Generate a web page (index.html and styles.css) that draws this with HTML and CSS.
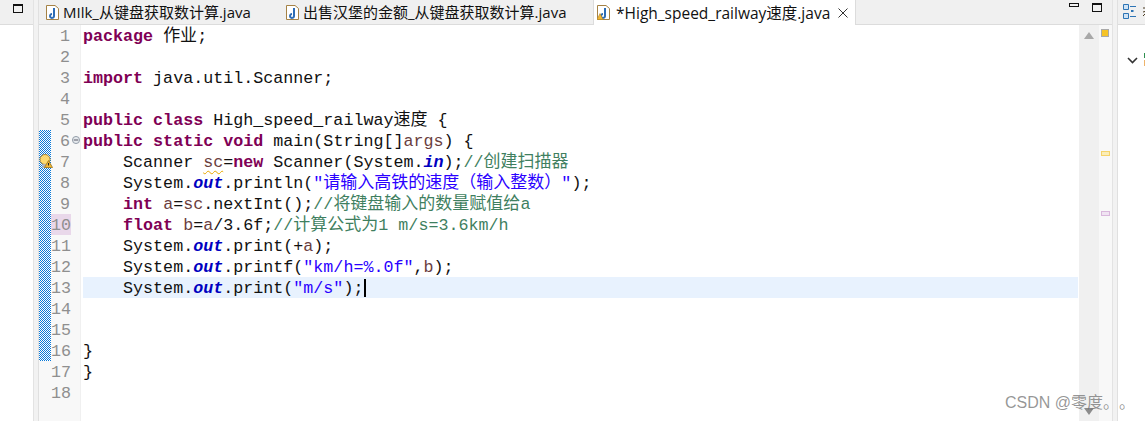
FILE: index.html
```html
<!DOCTYPE html>
<html lang="zh">
<head>
<meta charset="utf-8">
<title>Eclipse editor</title>
<link rel="stylesheet" href="styles.css">
</head>
<body>
<div class="window">
  <div class="left-panel">
    <div class="left-head"><span class="max-icon"></span></div>
  </div>
  <div class="sash"></div>
  <div class="editor-area">
    <div class="tabs">
      <div class="tab">
        <svg class="file-icon" viewBox="0 0 13 15"><path d="M.5.5h8.500l3.500 3v11H.5z" fill="#fff" stroke="#a58245"/><path d="M8 3v7.500a2 2 0 1 1-2-1.600" fill="none" stroke="#2d6cb5" stroke-width="2"/></svg>
        <span>MIlk_从键盘获取数计算.java</span>
      </div>
      <div class="tab">
        <svg class="file-icon" viewBox="0 0 13 15"><path d="M.5.5h8.500l3.500 3v11H.5z" fill="#fff" stroke="#a58245"/><path d="M8 3v7.500a2 2 0 1 1-2-1.600" fill="none" stroke="#2d6cb5" stroke-width="2"/></svg>
        <span>出售汉堡的金额_从键盘获取数计算.java</span>
      </div>
      <div class="tab active">
        <svg class="file-icon" viewBox="0 0 13 15"><path d="M.5.5h8.500l3.500 3v11H.5z" fill="#fff" stroke="#a58245"/><path d="M8 3v7.500a2 2 0 1 1-2-1.600" fill="none" stroke="#2d6cb5" stroke-width="2"/><path d="M3 8.500l3 6H0z" fill="#f2b632" stroke="#b58a2c" stroke-width=".6"/></svg>
        <span>*High_speed_railway速度.java</span>
        <svg class="close" viewBox="0 0 10 10"><path d="M.5.5l9 9M9.500.5l-9 9" stroke="#333" fill="none"/></svg>
      </div>
      <div class="tab-tools">
        <span class="min-icon"></span>
        <span class="max-icon"></span>
      </div>
    </div>
    <div class="editor">
      <div class="markers">
        <div class="changed"></div>
        <svg class="bulb" viewBox="0 0 14 14"><circle cx="6" cy="5.500" r="5" fill="#fbd970" stroke="#a8873a"/><rect x="3.500" y="10" width="5" height="4" fill="#aeb2b8"/><path d="M9.500 6.500l4 7H5.500z" fill="#f2b632" stroke="#9a7418" stroke-width=".8"/><path d="M9.500 9v2.500" stroke="#222"/></svg>
      </div>
      <div class="numbers">
        <div class="num">1</div>
        <div class="num">2</div>
        <div class="num">3</div>
        <div class="num">4</div>
        <div class="num">5</div>
        <div class="num">6<svg class="fold" viewBox="0 0 9 9"><circle cx="4.500" cy="4.500" r="4" fill="#e6eaee" stroke="#8a94a0"/><path d="M2 4.500h5" stroke="#445"/></svg></div>
        <div class="num">7</div>
        <div class="num">8</div>
        <div class="num">9</div>
        <div class="num num-mark">10</div>
        <div class="num">11</div>
        <div class="num">12</div>
        <div class="num">13</div>
        <div class="num">14</div>
        <div class="num">15</div>
        <div class="num">16</div>
        <div class="num">17</div>
        <div class="num">18</div>
      </div>
      <div class="code">
        <div class="line"><b class="kw">package</b> <span class="zh">作业</span>;</div>
        <div class="line"></div>
        <div class="line"><b class="kw">import</b> java.util.Scanner;</div>
        <div class="line"></div>
        <div class="line"><b class="kw">public</b> <b class="kw">class</b> High_speed_railway<span class="zh">速度</span> {</div>
        <div class="line"><b class="kw">public</b> <b class="kw">static</b> <b class="kw">void</b> main(String[]<span class="var">args</span>) {</div>
        <div class="line">    Scanner <span class="warn">sc</span>=<b class="kw">new</b> Scanner(System.<b class="field">in</b>);<span class="cm">//<span class="zh">创建扫描器</span></span></div>
        <div class="line">    System.<b class="field">out</b>.println(<span class="str">"<span class="zh">请输入高铁的速度（输入整数）</span>"</span>);</div>
        <div class="line">    <b class="kw">int</b> <span class="var">a</span>=<span class="var">sc</span>.nextInt();<span class="cm">//<span class="zh">将键盘输入的数量赋值给</span>a</span></div>
        <div class="line">    <b class="kw">float</b> <span class="var">b</span>=<span class="var">a</span>/3.6f;<span class="cm">//<span class="zh">计算公式为</span>1 m/s=3.6km/h</span></div>
        <div class="line">    System.<b class="field">out</b>.print(+<span class="var">a</span>);</div>
        <div class="line">    System.<b class="field">out</b>.printf(<span class="str">"km/h=%.0f"</span>,<span class="var">b</span>);</div>
        <div class="line current">    System.<b class="field">out</b>.print(<span class="str">"m/s"</span>);<span class="caret"></span></div>
        <div class="line"></div>
        <div class="line"></div>
        <div class="line">}</div>
        <div class="line">}</div>
        <div class="line"></div>
      </div>
      <div class="scrollbar">
        <svg class="arrow" viewBox="0 0 10 7"><path d="M5 0l5 7H0z" fill="#a8a8a8"/></svg>
        <svg class="arrow" viewBox="0 0 10 7"><path d="M5 7l5-7H0z" fill="#8c8c8c"/></svg>
      </div>
      <div class="overview">
        <span class="status"></span>
        <span class="ov ov-warn"></span>
        <span class="ov ov-mark"></span>
      </div>
    </div>
  </div>
  <div class="sash"></div>
  <div class="right-panel">
    <div class="right-head">
      <svg class="outline" viewBox="0 0 14 16"><path d="M.500.500h5v5h-5zM.500 9.500h5v5h-5z" fill="#cfe3f5" stroke="#2d74b5"/><path d="M7 2.500h6M7 12.500h6" stroke="#2d74b5"/><path d="M8 7h2.500" stroke="#2d74b5" stroke-width="2"/></svg>
      <svg class="cropped" viewBox="0 0 4 12"><path d="M0 2h4M0 6l4-1M0 10l3-3" stroke="#4a3a20" fill="none"/></svg>
    </div>
    <div class="right-body">
      <svg class="chev" viewBox="0 0 11 7"><path d="M1 1l4.500 4.500L10 1" fill="none" stroke="#333" stroke-width="1.600"/></svg>
      <svg class="pkg" viewBox="0 0 6 14"><rect width="6" height="5" fill="#2f8f4f"/><rect y="7" width="6" height="6" fill="#eeb36a"/></svg>
    </div>
  </div>
</div>
<div class="watermark">CSDN @零度。。</div>
</body>
</html>
```

FILE: styles.css
```css
* { box-sizing: border-box; }
html, body { margin: 0; height: 100%; overflow: hidden; background: #fff; text-spacing-trim: space-all; }
.window { display: flex; width: 1145px; height: 421px; }

.left-panel { width: 33px; flex: none; }
.left-head { height: 25px; background: #f0f0f0; border-bottom: 1px solid #dcdcdc; padding: 4px 0 0 13px; }
.max-icon { display: block; width: 10px; height: 9px; border: 1px solid #111; border-top-width: 2px; }

.sash { width: 6px; flex: none; border-left: 1px solid #e3e3e3; background: #f2f2f2; border-right: 1px solid #e0e0e0; }

.editor-area { width: 1073px; flex: none; display: flex; flex-direction: column; }
.tabs { height: 25px; flex: none; display: flex; background: #f0f0f0; border-bottom: 1px solid #dcdcdc; font: 15px/24px "Open Sans", "Noto Sans CJK SC", sans-serif; color: #111; }
.tab { display: flex; align-items: center; gap: 4px; padding: 0 0 0 7px; height: 24px; white-space: nowrap; }
.tab:nth-child(1) { width: 240px; }
.tab:nth-child(2) { width: 314px; }
.tab.active { width: 263px; background: #fff; height: 25px; border-left: 1px solid #dcdcdc; border-right: 1px solid #dcdcdc; padding-left: 3px; gap: 6px; font-size: 15.500px; }
.file-icon { width: 13px; height: 15px; flex: none; }
.close { width: 10px; height: 10px; flex: none; margin-left: 2px; }
.tab-tools { margin-left: auto; display: flex; align-items: flex-start; gap: 13px; padding: 3px 10px 0 0; }
.min-icon { display: block; width: 10px; height: 4px; border: 1px solid #111; }

.editor { flex: 1; display: flex; min-height: 0; }
.markers { width: 12px; flex: none; background: #f8f8f8; position: relative; }
.changed { margin-top: 105px; height: 231px; background: repeating-conic-gradient(#0a78d7 0 25%, #fff 0 50%) 0 0 / 2px 2px; }
.bulb { position: absolute; left: 0; top: 129px; width: 14px; height: 14px; }

.numbers { width: 30px; flex: none; background: #f8f8f8; border-right: 1px solid #f0f0f0; }
.num { height: 21px; padding-right: 10px; text-align: right; font: 16.700px/23px "Liberation Mono", monospace; color: #8f8f8f; position: relative; }
.num-mark { width: 20px; padding-right: 0; background: #e9d8ea; }
.fold { position: absolute; left: 21px; top: 6px; width: 8px; height: 8px; }

.code { flex: 1; min-width: 0; margin: 0 1px 0 2px; font: 16.700px/23px "Liberation Mono", "Noto Sans CJK SC", monospace; color: #111; }
.line { height: 21px; white-space: pre; }
.zh { font-size: 17px; }
.current { background: #e8f2fe; }
.kw { color: #7f0055; }
.field { color: #0000c0; font-style: italic; }
.str { color: #2a00ff; }
.cm { color: #3f7f5f; }
.var { color: #6a3e3e; }
.warn { text-decoration: underline wavy #e8a800 1px; text-underline-offset: 3px; color: #6a3e3e; }
.caret { display: inline-block; width: 2px; height: 18px; margin-left: 1px; vertical-align: -4px; background: #000; }

.scrollbar { width: 20px; flex: none; background: #f0f0f0; display: flex; flex-direction: column; justify-content: space-between; align-items: center; padding: 7px 0 6px; }
.arrow { width: 10px; height: 7px; }
.overview { width: 13px; flex: none; background: #f8f8f8; padding-left: 2px; position: relative; }
.status { display: block; width: 8px; height: 8px; margin-top: 4px; background: #f5c326; border: 1px solid #a9a9a9; }
.ov { position: absolute; left: 2px; width: 9px; height: 5px; }
.ov-warn { top: 126px; background: #fbeeb8; border: 1px solid #f5d36b; }
.ov-mark { top: 186px; background: #f0e4f2; border: 1px solid #d9b8dc; }

.right-panel { flex: 1; min-width: 0; }
.right-head { height: 25px; background: #f0f0f0; border-bottom: 1px solid #dcdcdc; padding: 4px 0 0 5px; display: flex; gap: 6px; overflow: hidden; }
.outline { width: 14px; height: 16px; flex: none; }
.cropped { width: 4px; height: 12px; flex: none; margin-top: 2px; }
.right-body { display: flex; align-items: center; gap: 6px; padding: 28px 0 0 9px; overflow: hidden; }
.chev { width: 11px; height: 7px; flex: none; }
.pkg { width: 6px; height: 14px; flex: none; }

.watermark { position: absolute; left: 1005px; top: 393px; font: 16px/20px "Liberation Sans", "Noto Sans CJK SC", sans-serif; color: rgba(110, 110, 110, .72); white-space: nowrap; }
```
